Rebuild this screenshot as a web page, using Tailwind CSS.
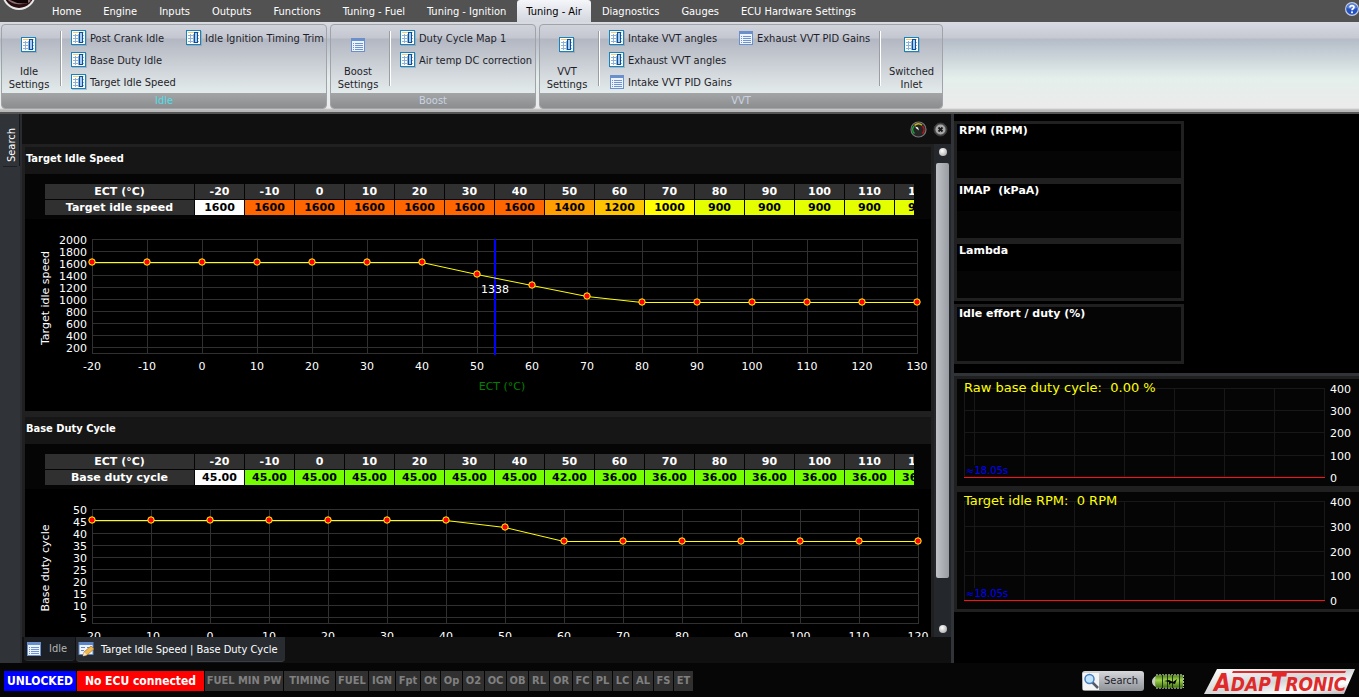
<!DOCTYPE html>
<html lang="en">
<head>
    <title>Adaptronic - Tuning Air</title>
    <meta charset="utf-8">
    <meta name="viewport" content="width=device-width, initial-scale=1">
    <script src="https://cdn.jsdelivr.net/npm/@tailwindcss/browser@4"></script>
</head>
<body class="h-screen flex flex-col overflow-hidden bg-black text-white text-[11px] leading-[13px] font-['DejaVu_Sans_Condensed','DejaVu_Sans',sans-serif]">

    <!-- shared icons -->
    <svg class="hidden">
        <symbol id="icon-map" viewBox="0 0 16 16">
            <rect x="1" y="1" width="15" height="15" fill="#8a94a0" opacity=".5"/>
            <rect x=".5" y=".5" width="14" height="14" fill="#fff" stroke="#1583bd"/>
            <path d="M2 2.5h11" stroke="#f5cc6c"/>
            <path d="M2 5.5h11M2 8.5h11M2 11.5h11M4.500 4v9M7.500 4v9" stroke="#8db4d8"/>
            <rect x="8.500" y="2.500" width="3" height="10" fill="#a9cdf0" stroke="#0b4f9c"/>
        </symbol>
        <symbol id="icon-list" viewBox="0 0 16 16">
            <rect x="1" y="1" width="14" height="14" fill="#6a90cc"/>
            <rect x="1" y="1" width="14" height="3" fill="#6a90cc"/>
            <rect x="2" y="4" width="12" height="10" fill="#eef4ff"/>
            <path d="M3 6.500h1M3 8.500h1M3 10.500h1M3 12.500h1M5 6.500h8M5 8.500h8M5 10.500h8M5 12.500h8" stroke="#6f94cf"/>
        </symbol>
    </svg>

    <!-- menu tabs -->
    <header class="relative h-[22px] shrink-0 bg-[#525252]">
        <svg class="absolute left-0 top-0" width="40" height="12" viewBox="0 0 40 12">
            <circle cx="19" cy="-7" r="17" fill="#e8e8e8"/>
            <circle cx="19" cy="-7" r="15" fill="#2a0d10"/>
            <path d="M8 0c4 5 18 6 23 1l-1-1z" fill="#8a7175"/>
            <path d="M10 0h18v3q-9 2-18-3z" fill="#120406"/>
        </svg>
        <nav class="flex h-full pl-[41px] whitespace-nowrap">
            <a href="#" class="px-[11px] pt-[5px]">Home</a>
            <a href="#" class="px-[11px] pt-[5px]">Engine</a>
            <a href="#" class="px-[11px] pt-[5px]">Inputs</a>
            <a href="#" class="px-[11px] pt-[5px]">Outputs</a>
            <a href="#" class="px-[11px] pt-[5px]">Functions</a>
            <a href="#" class="px-[11px] pt-[5px]">Tuning - Fuel</a>
            <a href="#" class="px-[11px] pt-[5px]">Tuning - Ignition</a>
            <a href="#" class="px-[9px] pt-[5px] rounded-t-[3px] bg-linear-to-b from-[#f4f6fa] to-[#d3d6de] text-black">Tuning - Air</a>
            <a href="#" class="px-[11px] pt-[5px]">Diagnostics</a>
            <a href="#" class="px-[11px] pt-[5px]">Gauges</a>
            <a href="#" class="px-[11px] pt-[5px]">ECU Hardware Settings</a>
        </nav>
        <button aria-label="Help" class="absolute right-0 top-[2px]"><svg width="14" height="14" viewBox="0 0 14 14">
            <circle cx="7" cy="7" r="6.400" fill="#2452c4" stroke="#c4cede" stroke-width="1.200"/>
            <path d="M2 6a5 4.500 0 0 1 10 0q-5 2-10 0z" fill="#7ba2ec" opacity=".6"/>
            <path d="M5 5.500c0-2.500 4-2.500 4-.2 0 1.500-2 1.400-2 3" fill="none" stroke="#fff" stroke-width="1.700"/>
            <rect x="6.100" y="9.400" width="1.800" height="1.800" fill="#fff"/>
        </svg></button>
    </header>

    <!-- ribbon -->
    <section class="flex shrink-0 gap-[3px] h-[92px] pl-[1px] pt-[2px] items-start border-b-2 border-[#555] bg-[linear-gradient(#d9dbe3_0,#c6c8d2_16px,#b4bcc8_17px,#e4efec_56px,#ecebeb_86px,#b8b8b8_88px)] text-[#1e1e2a] whitespace-nowrap">
        <div class="flex flex-col w-[326px] h-[85px] rounded-[4px] border border-[#a0a3a8] overflow-hidden bg-[linear-gradient(#d0d3da_0,#c4c7d0_13px,#b3b7c2_14px,#e4ebeb_68px)]">
            <div class="flex h-[68px]">
                <button class="w-[54px] flex flex-col items-center pt-[12px] leading-[13px]"><svg class="w-4 h-4 mb-[12px] shrink-0"><use href="#icon-map"/></svg>Idle<br>Settings</button>
                <div class="ml-[4px] mt-[6px] h-[55px] w-[2px] border-l border-[#9a9da2] bg-white"></div>
                <div class="ml-[9px] mt-[2px] grid grid-flow-col grid-rows-3 auto-rows-[22px] grid-cols-[115px_auto] content-start">
                    <button class="flex h-[22px] items-center gap-[3px]"><svg class="w-4 h-4"><use href="#icon-map"/></svg>Post Crank Idle</button>
                    <button class="flex h-[22px] items-center gap-[3px]"><svg class="w-4 h-4"><use href="#icon-map"/></svg>Base Duty Idle</button>
                    <button class="flex h-[22px] items-center gap-[3px]"><svg class="w-4 h-4"><use href="#icon-map"/></svg>Target Idle Speed</button>
                    <button class="flex h-[22px] items-center gap-[3px]"><svg class="w-4 h-4"><use href="#icon-map"/></svg>Idle Ignition Timing Trim</button>
                </div>
            </div>
            <div class="flex-1 text-center leading-[15px] bg-linear-to-b from-[#a4a5a6] to-[#8c8d8e] text-[#4fdfe8]">Idle</div>
        </div>
        <div class="flex flex-col w-[206px] h-[85px] rounded-[4px] border border-[#a0a3a8] overflow-hidden bg-[linear-gradient(#d0d3da_0,#c4c7d0_13px,#b3b7c2_14px,#e4ebeb_68px)]">
            <div class="flex h-[68px]">
                <button class="w-[54px] flex flex-col items-center pt-[12px] leading-[13px]"><svg class="w-4 h-4 mb-[12px] shrink-0"><use href="#icon-list"/></svg>Boost<br>Settings</button>
                <div class="ml-[4px] mt-[6px] h-[55px] w-[2px] border-l border-[#9a9da2] bg-white"></div>
                <div class="ml-[9px] mt-[2px]">
                    <button class="flex h-[22px] items-center gap-[3px]"><svg class="w-4 h-4"><use href="#icon-map"/></svg>Duty Cycle Map 1</button>
                    <button class="flex h-[22px] items-center gap-[3px]"><svg class="w-4 h-4"><use href="#icon-map"/></svg>Air temp DC correction</button>
                </div>
            </div>
            <div class="flex-1 text-center leading-[15px] bg-linear-to-b from-[#a4a5a6] to-[#8c8d8e] text-[#c9d3e2]">Boost</div>
        </div>
        <div class="flex flex-col w-[404px] h-[85px] rounded-[4px] border border-[#a0a3a8] overflow-hidden bg-[linear-gradient(#d0d3da_0,#c4c7d0_13px,#b3b7c2_14px,#e4ebeb_68px)]">
            <div class="flex h-[68px]">
                <button class="w-[54px] flex flex-col items-center pt-[12px] leading-[13px]"><svg class="w-4 h-4 mb-[12px] shrink-0"><use href="#icon-map"/></svg>VVT<br>Settings</button>
                <div class="ml-[4px] mt-[6px] h-[55px] w-[2px] border-l border-[#9a9da2] bg-white"></div>
                <div class="ml-[9px] mt-[2px] grid grid-flow-col grid-rows-3 grid-cols-[129px_141px] content-start">
                    <button class="flex h-[22px] items-center gap-[3px]"><svg class="w-4 h-4"><use href="#icon-map"/></svg>Intake VVT angles</button>
                    <button class="flex h-[22px] items-center gap-[3px]"><svg class="w-4 h-4"><use href="#icon-map"/></svg>Exhaust VVT angles</button>
                    <button class="flex h-[22px] items-center gap-[3px]"><svg class="w-4 h-4"><use href="#icon-list"/></svg>Intake VVT PID Gains</button>
                    <button class="flex h-[22px] items-center gap-[3px]"><svg class="w-4 h-4"><use href="#icon-list"/></svg>Exhaust VVT PID Gains</button>
                </div>
                <div class="mt-[6px] h-[55px] w-[2px] border-l border-[#9a9da2] bg-white"></div>
                <button class="flex-1 flex flex-col items-center pt-[12px] leading-[13px]"><svg class="w-4 h-4 mb-[12px] shrink-0"><use href="#icon-map"/></svg>Switched<br>Inlet</button>
            </div>
            <div class="flex-1 text-center leading-[15px] bg-linear-to-b from-[#a4a5a6] to-[#8c8d8e] text-[#c9d3e2]">VVT</div>
        </div>
    </section>

    <main class="flex flex-1 min-h-0">
        <!-- collapsed search panel -->
        <aside class="w-[22px] shrink-0 bg-[#303338] border-r-2 border-[#2a2b2e]">
            <button class="w-[20px] h-[52px] pr-[4px] pb-[10px] border-l border-[#15181c] [writing-mode:vertical-rl] rotate-180">Search</button>
            <div class="ml-[3px] w-[14px] h-px bg-[#1c1f23]"></div>
        </aside>

        <div class="flex flex-col flex-1 min-w-0 bg-[#101010]">
            <div class="flex h-[30px] shrink-0 items-center justify-end gap-[6px] pr-[3px]">
                <button aria-label="Gauge"><svg width="17" height="17" viewBox="0 0 17 17">
                    <circle cx="8.500" cy="8.500" r="7.500" fill="#252525" stroke="#777" stroke-width="1.200"/>
                    <path d="M4.500 12.500a5.500 5.500 0 0 1-.5-7.500" fill="none" stroke="#17a53a" stroke-width="1.500"/>
                    <path d="M4.500 4.500a5.500 5.500 0 0 1 7.500-.3" fill="none" stroke="#c3b51b" stroke-width="1.500"/>
                    <path d="M12.500 5a5.500 5.500 0 0 1 0 7.500" fill="none" stroke="#b8161a" stroke-width="1.500"/>
                    <path d="M5 5.500l1.500 2L9 9.500 8 6.500z" fill="#fff"/>
                </svg></button>
                <button aria-label="Close"><svg width="15" height="15" viewBox="0 0 15 15">
                    <circle cx="7.500" cy="7.500" r="6.500" fill="#4a4a4a" stroke="#3a3a3a" stroke-width="1"/>
                    <circle cx="7.500" cy="7.500" r="5" fill="#a8a8a8"/>
                    <path d="M5.500 5.500l4 4M9.500 5.500l-4 4" stroke="#1a1a1a" stroke-width="1.800"/>
                </svg></button>
            </div>

            <div class="flex flex-1 min-h-0">
                <div class="flex-1 min-w-0 overflow-hidden bg-[#202020] px-[3px] pt-[3px] space-y-[6px] font-['DejaVu_Sans',sans-serif]">
                    <section class="bg-black">
                        <h2 class="h-[27px] pl-[1px] leading-[24px] bg-[#161616] font-bold text-[11px] font-['DejaVu_Sans_Condensed','DejaVu_Sans',sans-serif]">Target Idle Speed</h2>
                        <div class="h-[45px] pt-[9px] pl-[19px] pr-[17px] bg-[#050505]">
                            <div class="overflow-hidden"><table id="idleTable" class="table-fixed w-[950px] border-separate border-spacing-px text-center font-bold text-[11px] leading-[15px]"></table></div>
                        </div>
                        <svg id="idleChart" class="block w-full h-[192px]"></svg>
                    </section>
                    <section class="bg-black">
                        <h2 class="h-[27px] pl-[1px] leading-[24px] bg-[#161616] font-bold text-[11px] font-['DejaVu_Sans_Condensed','DejaVu_Sans',sans-serif]">Base Duty Cycle</h2>
                        <div class="h-[45px] pt-[9px] pl-[19px] pr-[17px] bg-[#050505]">
                            <div class="overflow-hidden"><table id="dutyTable" class="table-fixed w-[950px] border-separate border-spacing-px text-center font-bold text-[11px] leading-[15px]"></table></div>
                        </div>
                        <svg id="dutyChart" class="block w-full h-[192px]"></svg>
                    </section>
                </div>
                <!-- scrollbar -->
                <div class="w-[17px] flex flex-col items-center bg-[#24272b] py-[4px]">
                    <div class="w-[8px] h-[8px] rounded-full bg-radial-[at_40%_35%] from-white to-[#999]"></div>
                    <div class="mt-[7px] mb-[47px] flex-1 w-[13px] rounded-[2px] bg-linear-to-r from-[#c0c2c6] to-[#999da3]"></div>
                    <div class="w-[8px] h-[8px] rounded-full bg-radial-[at_40%_35%] from-white to-[#999]"></div>
                </div>
            </div>

            <!-- page tabs -->
            <div class="flex h-[26px] shrink-0 pl-[2px] gap-[1px] items-start whitespace-nowrap">
                <button class="flex h-[24px] items-center gap-[7px] pl-[2px] pr-[8px] rounded-b-[4px] bg-[#1c1f23] border-b border-[#2a2d31] text-[#b5b5b5]"><svg class="w-4 h-4"><use href="#icon-list"/></svg>Idle</button>
                <button class="flex h-[25px] items-center gap-[6px] pl-[2px] pr-[7px] rounded-b-[4px] bg-[#282c31] border-b border-[#3b3f45]"><svg width="17" height="16" viewBox="0 0 17 16">
                    <rect x=".5" y="1" width="15" height="13" fill="#5f86c4"/>
                    <rect x="1.500" y="4" width="13" height="9" fill="#eef4ff"/>
                    <path d="M3 6.500h4M3 9.500h3M9 6.500h4" stroke="#5f86c4"/>
                    <path d="M5 15l1-4 7-6 3 3-7 6z" fill="#f2b94c" stroke="#a8742a" stroke-width=".7"/>
                    <path d="M5 15l1-4 3 3z" fill="#f8e6c8"/>
                </svg>Target Idle Speed | Base Duty Cycle</button>
            </div>
        </div>

        <!-- gauges and logs -->
        <aside class="w-[408px] shrink-0 border-l-[3px] border-[#303338] bg-black font-['DejaVu_Sans',sans-serif]">
            <div class="h-[259px] pt-[7px] font-bold text-[11px] leading-[14px]">
                <div class="w-[230px] h-[60px] border-[3px] border-[#202020] pl-[2px] bg-[linear-gradient(#000_50%,#050505_50%)]">RPM (RPM)</div>
                <div class="w-[230px] h-[60px] border-[3px] border-[#202020] pl-[2px] bg-[linear-gradient(#000_50%,#050505_50%)]">IMAP&nbsp; (kPaA)</div>
                <div class="w-[230px] h-[60px] border-[3px] border-[#202020] pl-[2px] bg-[linear-gradient(#000_50%,#050505_50%)]">Lambda</div>
                <div class="mt-[3px] w-[230px] h-[60px] border-[3px] border-[#202020] pl-[2px] bg-[#050505]">Idle effort / duty (%)</div>
            </div>
            <div class="border-t-[3px] border-[#303338]">
                <svg id="dutyLog" class="block w-full h-[113px] border-y-[3px] border-l-[3px] border-[#202020] bg-[#050505]"></svg>
                <svg id="rpmLog" class="block w-full h-[123px] border-y-[3px] border-l-[3px] border-[#202020] bg-[#050505]"></svg>
            </div>
        </aside>
    </main>

    <!-- status bar -->
    <footer class="flex h-[34px] shrink-0 items-center gap-[1px] pt-[2px] pl-[4px] pr-[3px] bg-[#060606] whitespace-nowrap text-center font-bold text-[12px] leading-[20px] text-[#808080]">
        <div class="w-[72px] bg-[#0000ff] text-white">UNLOCKED</div>
        <div class="w-[127px] bg-[#ff0000] text-white">No ECU connected</div>
        <div class="w-[78px] bg-[#303030] text-[11px]">FUEL MIN PW</div>
        <div class="w-[51px] bg-[#303030] text-[11px]">TIMING</div>
        <div class="w-[32px] bg-[#303030] text-[11px]">FUEL</div>
        <div class="w-[26px] bg-[#303030] text-[11px]">IGN</div>
        <div class="w-[24px] bg-[#303030] text-[11px]">Fpt</div>
        <div class="w-[19px] bg-[#303030] text-[11px]">Ot</div>
        <div class="w-[21px] bg-[#303030] text-[11px]">Op</div>
        <div class="w-[21px] bg-[#303030] text-[11px]">O2</div>
        <div class="w-[21px] bg-[#303030] text-[11px]">OC</div>
        <div class="w-[21px] bg-[#303030] text-[11px]">OB</div>
        <div class="w-[20px] bg-[#303030] text-[11px]">RL</div>
        <div class="w-[22px] bg-[#303030] text-[11px]">OR</div>
        <div class="w-[19px] bg-[#303030] text-[11px]">FC</div>
        <div class="w-[19px] bg-[#303030] text-[11px]">PL</div>
        <div class="w-[19px] bg-[#303030] text-[11px]">LC</div>
        <div class="w-[20px] bg-[#303030] text-[11px]">AL</div>
        <div class="w-[19px] bg-[#303030] text-[11px]">FS</div>
        <div class="w-[19px] bg-[#303030] text-[11px]">ET</div>
        <button class="ml-auto flex items-center gap-[5px] w-[62px] h-[20px] pl-[1px] rounded-[3px] bg-linear-to-b from-[#d6d8dc] to-[#8e9196] text-[11px] font-normal text-[#1e1e2a]"><svg width="16" height="17" viewBox="0 0 16 17">
            <rect width="16" height="17" fill="#f4f4f4"/>
            <path d="M9 9l6 6" stroke="#555a66" stroke-width="2.500"/>
            <circle cx="6.500" cy="6" r="4.500" fill="#bfe4fa" stroke="#4a7fc0" stroke-width="1.500"/>
        </svg>Search</button>
        <svg class="ml-[7px]" width="33" height="15" viewBox="0 0 33 15">
            <defs><linearGradient id="cell" x2="0" y2="1"><stop offset="0" stop-color="#4b7a1c"/><stop offset=".4" stop-color="#9fd44a"/><stop offset="1" stop-color="#3d6a12"/></linearGradient></defs>
            <path d="M4 2Q0 4 0 7.500T4 13z" fill="#c9ccc4"/>
            <path d="M4 1H31V14H4q-2-6.500 0-13z" fill="url(#cell)"/>
            <path d="M4 .8H31M4 14.200H31M31.500 1v13" stroke="#dfe6d4" stroke-width=".8" stroke-dasharray="2 1"/>
            <path d="M10.500 1v13M15.500 1v13M20.500 1v13M27.500 1v13" stroke="#1c3306"/>
            <path d="M12 7l5-1 4 2 4-3-2 5-4-1-2 2 0-3z" fill="#000"/>
        </svg>
        <svg class="ml-[17px]" width="153" height="27" viewBox="0 0 153 27">
            <defs><linearGradient id="plate" x2="1" y2="1"><stop offset="0" stop-color="#fff"/><stop offset=".5" stop-color="#d4d6d8"/><stop offset=".75" stop-color="#fff"/><stop offset="1" stop-color="#aaa"/></linearGradient></defs>
            <path d="M14 1H152L141 26H1z" fill="url(#plate)"/>
            <path d="M30 3H143l-1 2H29z" fill="#e02a2a"/>
            <text x="11" y="23" fill="#e02a2a" class="font-bold italic font-['DejaVu_Sans_Condensed',sans-serif]"><tspan font-size="24">A</tspan><tspan font-size="19">DAP</tspan><tspan font-size="24">T</tspan><tspan font-size="19">RONIC</tspan></text>
        </svg>
    </footer>

    <script>
        const heat = {
            1600: '#ff6600', 1400: '#ffa000', 1200: '#ffc400', 1000: '#ffff00', 900: '#e4ff00',
            '45.00': '#74ff00', '42.00': '#74ff00', '36.00': '#74ff00'
        };

        // fills a one-row lookup table, the first cell is the selected one
        function drawTable(id, label, values) {
            const head = values.map((v, i) => `<th scope="col" class="bg-[#303030] p-0">${-20 + i * 10}</th>`).join('');
            const cells = values.map((v, i) => `<td class="p-0 text-black" style="background:${i ? heat[v] : '#fff'}">${v}</td>`).join('');
            document.getElementById(id).innerHTML =
                `<colgroup><col class="w-[149px]">${'<col class="w-[49px]">'.repeat(values.length)}</colgroup>` +
                `<tr><th scope="col" class="bg-[#303030] p-0">ECT (°C)</th>${head}</tr>` +
                `<tr><th scope="row" class="bg-[#303030] p-0">${label}</th>${cells}</tr>`;
        }

        function drawChart(id, o) {
            const left = 67, top = 20, bottom = 134, right = left + o.step * (o.points.length - 1);
            let s = '';
            o.yLabels.forEach((v, i) => {
                const y = top + i * 12;
                s += `<path d="M${left} ${y + .5}H${right}" stroke="#303030"/>`;
                s += `<text x="${left - 5}" y="${y + 5}" text-anchor="end">${v}</text>`;
            });
            o.points.forEach((p, i) => {
                const x = left + i * o.step;
                s += `<path d="M${x + .5} ${top}V${bottom}" stroke="#303030"/>`;
                s += `<text x="${x}" y="151" text-anchor="middle">${-20 + i * 10}</text>`;
            });
            s += `<path d="M${left} ${bottom + .5}H${right + 1}" stroke="#303030"/>`;
            if (o.cursor) {
                s += `<path d="M${o.cursor} ${top}V136" stroke="#0000ff" stroke-width="2"/>`;
            }
            s += `<polyline points="${o.points.map((p, i) => `${left + i * o.step},${p + .5}`).join(' ')}" fill="none" stroke="#ffff00"/>`;
            o.points.forEach((p, i) => {
                s += `<circle cx="${left + i * o.step}" cy="${p}" r="3.200" fill="#ff0000" stroke="#ffff00"/>`;
            });
            if (o.cursor) {
                s += `<text x="${o.cursor}" y="74" text-anchor="middle">${o.cursorText}</text>`;
            }
            s += `<text x="477" y="171" text-anchor="middle" class="fill-[#008000]">ECT (°C)</text>`;
            s += `<text transform="translate(24 79) rotate(-90)" text-anchor="middle">${o.title}</text>`;
            document.getElementById(id).innerHTML = `<g fill="#fff" font-size="11">${s}</g>`;
        }

        // scrolling log strip, ys are the rows for 400, 300, 200, 100 and 0
        function drawLog(id, title, ys) {
            const last = ys[4];
            let s = '';
            ys.forEach((y, i) => {
                s += `<path d="M7 ${y + .5}H368" stroke="#181818"/>`;
                s += `<text x="373" y="${y + 5}" fill="#fff" font-size="11">${400 - i * 100}</text>`;
            });
            [7, 17, 67, 117, 167, 217, 267, 317, 367].forEach(x => {
                s += `<path d="M${x + .5} ${ys[0]}V${last}" stroke="#181818"/>`;
            });
            s += `<rect x="8" y="${last - 12}" width="46" height="11" fill="#050505"/>`;
            s += `<text x="9" y="${last - 3}" fill="#0000ff" font-size="10">≈18.05s</text>`;
            s += `<path d="M7 ${last + .5}H368" stroke="#ff1010"/>`;
            s += `<text x="7" y="13" fill="#ffff00" font-size="13" xml:space="preserve">${title}</text>`;
            document.getElementById(id).innerHTML = s;
        }

        drawTable('idleTable', 'Target idle speed', [1600, 1600, 1600, 1600, 1600, 1600, 1600, 1400, 1200, 1000, 900, 900, 900, 900, 900, 900]);
        drawTable('dutyTable', 'Base duty cycle', ['45.00', '45.00', '45.00', '45.00', '45.00', '45.00', '45.00', '42.00', '36.00', '36.00', '36.00', '36.00', '36.00', '36.00', '36.00', '36.00']);

        drawChart('idleChart', {
            title: 'Target idle speed',
            step: 55,
            yLabels: [2000, 1800, 1600, 1400, 1200, 1000, 800, 600, 400, 200],
            points: [43, 43, 43, 43, 43, 43, 43, 55, 66, 77, 83, 83, 83, 83, 83, 83],
            cursor: 470,
            cursorText: '1338'
        });
        drawChart('dutyChart', {
            title: 'Base duty cycle',
            step: 59,
            yLabels: [50, 45, 40, 35, 30, 25, 20, 15, 10, 5],
            points: [31, 31, 31, 31, 31, 31, 31, 38, 52, 52, 52, 52, 52, 52, 52]
        });

        drawLog('dutyLog', 'Raw base duty cycle:  0.00 %', [9, 31, 53, 76, 98]);
        drawLog('rpmLog', 'Target idle RPM:  0 RPM', [9, 34, 59, 83, 108]);
    </script>
</body>
</html>
